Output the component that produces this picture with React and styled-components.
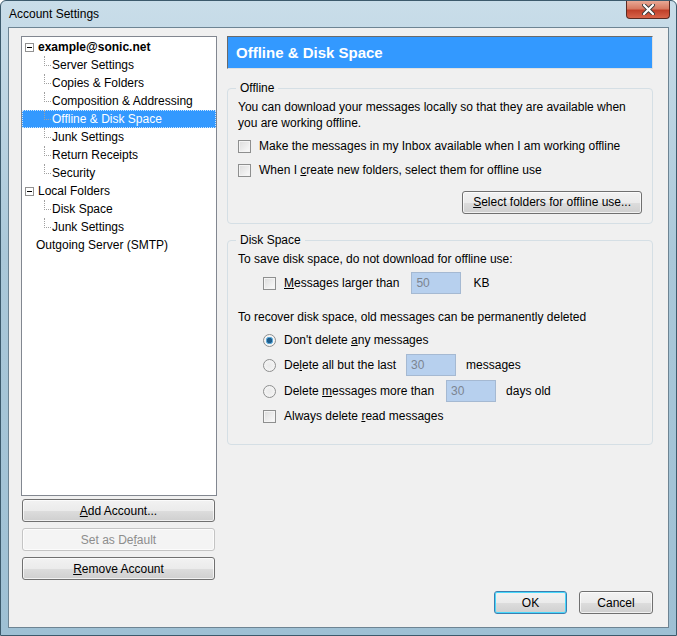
import React from 'react';
import styled, { createGlobalStyle } from 'styled-components';

const Global = createGlobalStyle`
  html, body { margin: 0; padding: 0; }
  body { font-family: "Liberation Sans", Arial, sans-serif; font-size: 12px; color: #000; }
`;

const Frame = styled.div`
  width: 677px;
  height: 636px;
  box-sizing: border-box;
  display: flex;
  flex-direction: column;
  background: linear-gradient(180deg, #c9dde9 0%, #aac8d9 40%, #9ec0d4 100%);
  border: 1px solid #3c5a6c;
  border-radius: 6px 6px 0 0;
  padding: 0 7px 7px 7px;
`;

const TitleBar = styled.div`
  height: 26px;
  display: flex;
  align-items: flex-start;
  justify-content: space-between;
`;

const Title = styled.div`
  padding: 6px 0 0 1px;
  font-size: 12px;
`;

const Close = styled.div`
  width: 42px;
  height: 17px;
  margin-right: -1px;
  border: 1px solid #5a2a22;
  border-top: none;
  border-radius: 0 0 4px 4px;
  background: linear-gradient(180deg, #e8a894 0%, #d67a62 45%, #c0402a 55%, #d8644a 100%);
  display: flex;
  align-items: center;
  justify-content: center;
`;

const Client = styled.div`
  flex: 1;
  background: #f0f0f0;
  border: 1px solid #6d8493;
  display: flex;
  flex-direction: column;
  padding: 8px 13px 13px 12px;
`;

const Main = styled.div`
  flex: 1;
  display: flex;
  gap: 10px;
`;

const Left = styled.div`
  width: 196px;
  display: flex;
  flex-direction: column;
`;

const Tree = styled.div`
  height: 460px;
  background: #fff;
  border: 1px solid #828790;
  padding-top: 1px;
  box-sizing: border-box;
`;

const Row = styled.div`
  height: 18px;
  display: flex;
  align-items: center;
  padding-left: ${p => p.$indent}px;
  background: ${p => (p.$selected ? '#3399ff' : 'transparent')};
  color: ${p => (p.$selected ? '#fff' : '#000')};
  outline: ${p => (p.$selected ? '1px dotted #cde6ff' : 'none')};
  outline-offset: -1px;
  font-weight: ${p => (p.$bold ? 'bold' : 'normal')};
  white-space: pre;
`;

const Guide = styled.span`
  width: 6px;
  height: 9px;
  margin-right: 1px;
  border-left: 1px dotted #a0a0a0;
  border-bottom: 1px dotted #a0a0a0;
  align-self: flex-start;
`;

const Toggle = styled.span`
  width: 7px;
  height: 7px;
  border: 1px solid #919191;
  margin-right: 4px;
  display: flex;
  align-items: center;
  justify-content: center;
  &::after { content: ''; width: 5px; height: 1px; background: #000; }
`;

const LeftButtons = styled.div`
  display: flex;
  flex-direction: column;
  gap: 6px;
  margin-top: 3px;
  padding: 0 2px 0 1px;
`;

const Button = styled.button`
  height: 23px;
  width: ${p => p.$w || 'auto'};
  font: inherit;
  white-space: pre;
  color: ${p => (p.$disabled ? '#8d8d8d' : '#000')};
  border: 1px solid ${p => (p.$disabled ? '#c4c4c4' : p.$default ? '#3c7fb1' : '#707070')};
  border-radius: 3px;
  background: ${p =>
    p.$disabled
      ? '#f4f4f4'
      : 'linear-gradient(180deg, #f2f2f2 0%, #ebebeb 50%, #dddddd 51%, #cfcfcf 100%)'};
  box-shadow: inset 0 0 0 1px ${p => (p.$default ? '#48d8fb' : 'rgba(255,255,255,0.7)')};
  padding: 0 10px;
  display: flex;
  align-items: center;
  justify-content: center;
`;

const Right = styled.div`
  flex: 1;
  display: flex;
  flex-direction: column;
  padding-right: 2px;
`;

const Header = styled.div`
  height: 31px;
  background: #3399ff;
  border: 1px solid #6a6a6a;
  border-right-color: #e0e0e0;
  border-bottom-color: #e0e0e0;
  color: #fff;
  font-weight: bold;
  font-size: 15px;
  display: flex;
  align-items: center;
  padding-left: 8px;
`;

const Group = styled.fieldset`
  margin: ${p => p.$top}px 0 0 0;
  border: 1px solid #d5dfe5;
  border-radius: 4px;
  padding: 2px 10px 10px 10px;
  height: ${p => p.$h}px;
  box-sizing: border-box;
  display: flex;
  flex-direction: column;
  & > legend { padding: 0 4px; margin-left: -2px; }
`;

const Text = styled.div`
  line-height: 16px;
  margin: ${p => p.$m || '0'};
`;

const OptRow = styled.div`
  display: flex;
  align-items: center;
  height: ${p => p.$h || 24}px;
  white-space: pre;
  justify-content: ${p => (p.$end ? 'flex-end' : 'flex-start')};
  margin-top: ${p => p.$mt || 0}px;
  padding-left: ${p => p.$indent || 0}px;
`;

const Box = styled.span`
  width: 11px;
  height: 11px;
  border: 1px solid #8e8f8f;
  background: linear-gradient(135deg, #dcdcdc, #fbfbfb);
  box-shadow: inset 0 0 0 1px #f4f4f4;
  margin-right: 8px;
  flex-shrink: 0;
`;

const Radio = styled.span`
  width: 11px;
  height: 11px;
  border-radius: 50%;
  border: 1px solid #8e8f8f;
  background: radial-gradient(circle, ${p => (p.$on ? '#1e5c8a 0 2.5px, #5da9d8 3px 3.5px, #f4f4f4 4px' : '#eaeaea 0, #f8f8f8 100%')});
  margin-right: 8px;
  flex-shrink: 0;
`;

const Field = styled.span`
  width: ${p => p.$w}px;
  height: 22px;
  box-sizing: border-box;
  background: #b7d0ee;
  border: 1px solid #a5b9d2;
  color: #7c8591;
  padding-left: 4px;
  display: flex;
  align-items: center;
  margin: 0 ${p => p.$after}px 0 ${p => p.$before}px;
`;

const Footer = styled.div`
  display: flex;
  justify-content: flex-end;
  gap: 12px;
  padding-right: 2px;
`;

const U = styled.span`text-decoration: underline;`;

const tree = [
  { label: 'example@sonic.net', bold: true, toggle: true, indent: 3 },
  { label: 'Server Settings', child: true },
  { label: 'Copies & Folders', child: true },
  { label: 'Composition & Addressing', child: true },
  { label: 'Offline & Disk Space', child: true, selected: true },
  { label: 'Junk Settings', child: true },
  { label: 'Return Receipts', child: true },
  { label: 'Security', child: true },
  { label: 'Local Folders', toggle: true, indent: 3 },
  { label: 'Disk Space', child: true },
  { label: 'Junk Settings', child: true },
  { label: 'Outgoing Server (SMTP)', indent: 14 },
];

export default function App() {
  return (
    <>
      <Global />
      <Frame>
        <TitleBar>
          <Title>Account Settings</Title>
          <Close>
            <svg width="13" height="11" viewBox="0 0 13 11">
              <path d="M2 1 L11 10 M11 1 L2 10" stroke="#3a3a3a" strokeWidth="4" strokeLinecap="round" />
              <path d="M2 1 L11 10 M11 1 L2 10" stroke="#fff" strokeWidth="2.2" strokeLinecap="round" />
            </svg>
          </Close>
        </TitleBar>
        <Client>
          <Main>
            <Left>
              <Tree>
                {tree.map((t, i) => (
                  <Row key={i} $indent={t.child ? 22 : t.indent} $selected={t.selected} $bold={t.bold}>
                    {t.toggle && <Toggle />}
                    {t.child && <Guide />}
                    <span>{t.label}</span>
                  </Row>
                ))}
              </Tree>
              <LeftButtons>
                <Button><span><U>A</U>dd Account...</span></Button>
                <Button $disabled><span>Set as De<U>f</U>ault</span></Button>
                <Button><span><U>R</U>emove Account</span></Button>
              </LeftButtons>
            </Left>
            <Right>
              <Header>Offline &amp; Disk Space</Header>
              <Group $top={12} $h={143}>
                <legend>Offline</legend>
                <Text $m="2px 0 3px 0">You can download your messages locally so that they are available when you are working offline.</Text>
                <OptRow><Box /><span>Make the messages in my Inbox available when I am working offline</span></OptRow>
                <OptRow><Box /><span>When I <U>c</U>reate new folders, select them for offline use</span></OptRow>
                <OptRow $end $mt={8}>
                  <Button><span><U>S</U>elect folders for offline use...</span></Button>
                </OptRow>
              </Group>
              <Group $top={9} $h={212}>
                <legend>Disk Space</legend>
                <Text $m="2px 0 2px 0">To save disk space, do not download for offline use:</Text>
                <OptRow $indent={25} $h={28}><Box /><span><U>M</U>essages larger than</span><Field $w={50} $before={12} $after={12}>50</Field><span>KB</span></OptRow>
                <Text $m="12px 0 3px 0">To recover disk space, old messages can be permanently deleted</Text>
                <OptRow $indent={25}><Radio $on /><span>Don't delete <U>a</U>ny messages</span></OptRow>
                <OptRow $indent={25} $h={26}><Radio /><span>De<U>l</U>ete all but the last</span><Field $w={50} $before={10} $after={10}>30</Field><span>messages</span></OptRow>
                <OptRow $indent={25} $h={26}><Radio /><span>Delete <U>m</U>essages more than</span><Field $w={50} $before={12} $after={10}>30</Field><span>days old</span></OptRow>
                <OptRow $indent={25}><Box /><span>Always delete <U>r</U>ead messages</span></OptRow>
              </Group>
            </Right>
          </Main>
          <Footer>
            <Button $w="73px" $default>OK</Button>
            <Button $w="74px">Cancel</Button>
          </Footer>
        </Client>
      </Frame>
    </>
  );
}
